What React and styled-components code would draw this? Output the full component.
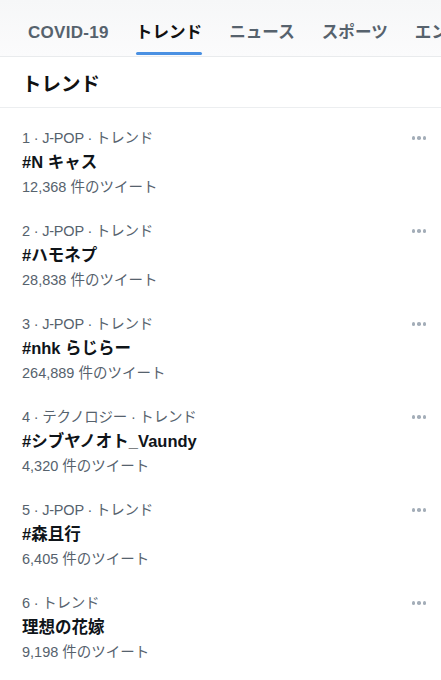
import React from "react";
import styled, { createGlobalStyle } from "styled-components";

const Global = createGlobalStyle`
  html, body { margin: 0; padding: 0; background: #fff; }
  body { font-family: "Liberation Sans", "Noto Sans CJK JP", sans-serif; -webkit-font-smoothing: antialiased; }
`;

const Page = styled.div`
  width: 441px;
  height: 680px;
  overflow: hidden;
  background: #fff;
`;

const TabBar = styled.nav`
  display: flex;
  gap: 27px;
  padding: 0 0 0 28px;
  height: 56px;
  align-items: flex-end;
  background: linear-gradient(#f6f7f8, #fbfbfc);
  border-bottom: 1px solid #e9ebed;
  white-space: nowrap;
  overflow: hidden;
`;

const Tab = styled.div`
  position: relative;
  flex: none;
  font-size: ${(p) => (p.$latin ? "17px" : "16.6px")};
  font-weight: 700;
  letter-spacing: ${(p) => (p.$latin ? "0.3px" : "0")};
  color: ${(p) => (p.$active ? "#111" : "#56626d")};
  padding-bottom: 13px;
  &::after {
    content: "";
    display: ${(p) => (p.$active ? "block" : "none")};
    position: absolute;
    left: 0;
    right: 0;
    bottom: 1px;
    height: 3px;
    border-radius: 2px;
    background: #4a90e2;
  }
`;

const Header = styled.h2`
  margin: 0;
  height: 51px;
  box-sizing: border-box;
  display: flex;
  align-items: center;
  padding: 1px 22px 0;
  font-size: 19.5px;
  font-weight: 700;
  color: #111;
  border-bottom: 1px solid #eceef0;
`;

const List = styled.div`
  display: flex;
  flex-direction: column;
  padding-top: 20px;
`;

const Item = styled.div`
  position: relative;
  height: 93px;
  padding: 0 22px;
  box-sizing: border-box;
`;

const Meta = styled.div`
  font-size: 14.5px;
  color: #56626d;
  line-height: 20px;
  letter-spacing: -0.2px;
`;

const Title = styled.div`
  font-size: 16.5px;
  font-weight: 700;
  color: #0f1419;
  line-height: 24px;
  margin-top: 2px;
`;

const Count = styled.div`
  font-size: 14.5px;
  color: #56626d;
  line-height: 20px;
  margin-top: 3px;
`;

const More = styled.div`
  position: absolute;
  right: 15px;
  top: 8px;
  display: flex;
  gap: 2px;
  span {
    width: 3.5px;
    height: 3.5px;
    border-radius: 50%;
    background: #a3adb8;
  }
`;

const tabs = ["COVID-19", "トレンド", "ニュース", "スポーツ", "エンタメ"];

const trends = [
  { meta: "1 · J-POP · トレンド", title: "#N キャス", count: "12,368 件のツイート" },
  { meta: "2 · J-POP · トレンド", title: "#ハモネプ", count: "28,838 件のツイート" },
  { meta: "3 · J-POP · トレンド", title: "#nhk らじらー", count: "264,889 件のツイート" },
  { meta: "4 · テクノロジー · トレンド", title: "#シブヤノオト_Vaundy", count: "4,320 件のツイート" },
  { meta: "5 · J-POP · トレンド", title: "#森且行", count: "6,405 件のツイート" },
  { meta: "6 · トレンド", title: "理想の花嫁", count: "9,198 件のツイート" },
];

export default function App() {
  return (
    <Page>
      <Global />
      <TabBar>
        {tabs.map((t) => (
          <Tab key={t} $active={t === "トレンド"} $latin={t === "COVID-19"}>{t}</Tab>
        ))}
      </TabBar>
      <Header>トレンド</Header>
      <List>
        {trends.map((t) => (
          <Item key={t.title}>
            <Meta>{t.meta}</Meta>
            <Title>{t.title}</Title>
            <Count>{t.count}</Count>
            <More><span /><span /><span /></More>
          </Item>
        ))}
      </List>
    </Page>
  );
}
